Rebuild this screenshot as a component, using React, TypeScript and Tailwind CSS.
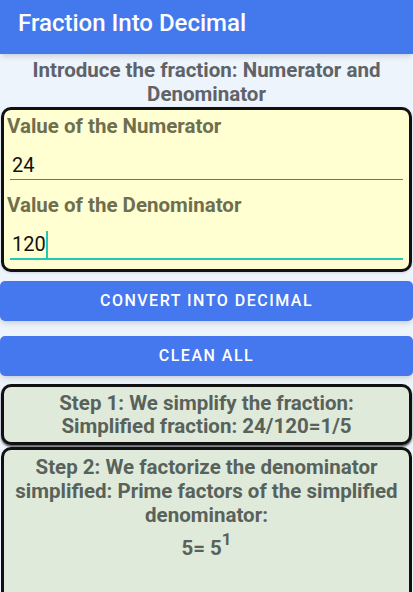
import { useState } from "react";

const font = { fontFamily: "Roboto, 'Noto Sans', sans-serif" };

const App = () => {
  const [num, setNum] = useState("24");
  const [den, setDen] = useState("120");

  return (
    <div className="w-[413px] h-[592px] overflow-hidden bg-[#edf4fc]" style={font}>
      <header className="h-[54px] bg-[#4479ee] px-[18px] pt-[9px] shadow-md">
        <h1 className="text-[24px] leading-[28px] font-medium text-white">Fraction Into Decimal</h1>
      </header>

      <p className="pt-[4px] px-2 text-center text-[20.5px] leading-[24px] font-bold text-[#5f6368]">
        Introduce the fraction: Numerator and Denominator
      </p>

      <div className="mt-[1px] mx-[1px] rounded-[10px] border-[3px] border-[#111] bg-[#ffffd2] pt-[4px] pb-[9px] shadow">
        <label className="block pl-[3px] text-[20.5px] leading-[24px] font-bold text-[#6f6f4f]">
          Value of the Numerator
        </label>
        <div className="mx-[6px] mt-[13px] border-b border-[#77774f]">
          <input
            value={num}
            onChange={(e) => setNum(e.target.value)}
            className="w-full bg-transparent outline-none pl-[2px] text-[20px] leading-[28px] text-[#111]"
          />
        </div>
        <label className="block pl-[3px] mt-[13px] text-[20.5px] leading-[24px] font-bold text-[#6f6f4f]">
          Value of the Denominator
        </label>
        <div className="mx-[6px] mt-[13px] border-b-2 border-[#22c8b2] flex items-center">
          <span className="pl-[2px] text-[20px] leading-[28px] text-[#111]">{den}</span>
          <span className="w-[2px] h-[27px] bg-[#22c8b2]" />
        </div>
      </div>

      <div className="mt-[9px] flex flex-col gap-[15px]">
        <button
          onClick={() => {}}
          className="h-[40px] w-full rounded-[5px] bg-[#4577ef] text-white text-[16px] font-medium tracking-[1.5px] shadow-md"
        >
          CONVERT INTO DECIMAL
        </button>
        <button
          onClick={() => {
            setNum("");
            setDen("");
          }}
          className="h-[40px] w-full rounded-[5px] bg-[#4577ef] text-white text-[16px] font-medium tracking-[1.5px] shadow-md"
        >
          CLEAN ALL
        </button>
      </div>

      <div className="mt-[8px] mx-[1px] rounded-[10px] border-[3px] border-[#111] bg-[#dfeadb] pt-[5px] pb-[4px] text-center text-[20.5px] leading-[23px] font-bold text-[#59625a] shadow-[0_2px_2px_rgba(0,0,0,0.6)]">
        <p>Step 1: We simplify the fraction:</p>
        <p>Simplified fraction: 24/120=1/5</p>
      </div>

      <div className="mt-[2px] mx-[1px] h-[160px] rounded-[10px] border-[3px] border-[#111] bg-[#dfeadb] pt-[5px] text-center text-[20.5px] leading-[24px] font-bold text-[#59625a]">
        <p className="px-1">
          Step 2: We factorize the denominator simplified: Prime factors of the simplified denominator:
        </p>
        <p className="mt-[9px]">
          5= 5<sup className="text-[17px] relative -top-[10px]">1</sup>
        </p>
      </div>
    </div>
  );
};

export default App;
